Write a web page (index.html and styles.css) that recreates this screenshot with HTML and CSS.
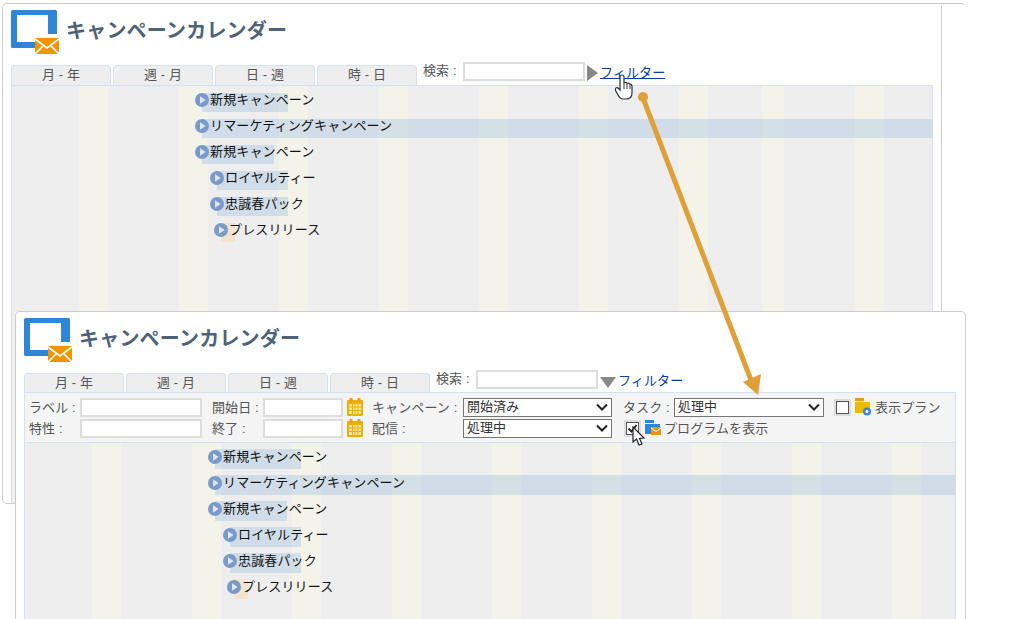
FILE: index.html
```html
<!DOCTYPE html>
<html lang="ja">

<head>
    <meta charset="UTF-8">
    <title>キャンペーンカレンダー</title>
    <link rel="stylesheet" href="styles.css">
</head>

<body>
    <!-- Shared icons -->
    <svg class="icon-defs" width="0" height="0">
        <symbol id="icon-play" viewBox="0 0 14 14">
            <circle cx="7" cy="7" r="7" fill="#7a9bc9" />
            <path d="M5 3.2 L10.6 7 L5 10.8 Z" fill="#dfe7f2" />
        </symbol>
        <symbol id="icon-logo" viewBox="0 0 48 44">
            <path d="M1.5 0 H44.5 Q46 0 46 1.5 V24 H37 V5 H6 V32 H24 V38 H1.5 Q0 38 0 36.5 V1.5 Q0 0 1.5 0 Z" fill="#2f86d6" />
            <rect x="24" y="28" width="24" height="16" fill="#f09400" />
            <path d="M24 29 L36 38 L48 29 M24 44 L33 35 M48 44 L39 35" fill="none" stroke="#fff" stroke-width="1.6" />
        </symbol>
        <symbol id="icon-date" viewBox="0 0 16 18">
            <rect x="0" y="2" width="16" height="16" rx="1" fill="#eeb000" />
            <rect x="2.5" y="0" width="3" height="4" fill="#f39a1e" />
            <rect x="10.5" y="0" width="3" height="4" fill="#f39a1e" />
            <path d="M2 6 H14 V16 H2 Z" fill="#fbe6a8" />
            <path d="M5.5 6 V16 M8 6 V16 M11 6 V16 M2 9 H14 M2 12.5 H14" stroke="#eeb000" stroke-width="1" />
        </symbol>
        <symbol id="icon-folder-plan" viewBox="0 0 16 18">
            <rect x="0" y="0" width="9" height="3" fill="#ea9a12" />
            <path d="M0 4 H15 V15 H0 Z" fill="#f2b705" />
            <circle cx="12" cy="13.5" r="4" fill="#3b87d6" />
            <circle cx="12" cy="13.5" r="1.5" fill="#fff" />
        </symbol>
        <symbol id="icon-folder-prog" viewBox="0 0 16 16">
            <rect x="0" y="0" width="9" height="3" fill="#2f86d6" />
            <path d="M0 4 H15 V14 H0 Z" fill="#2f86d6" />
            <rect x="6" y="7" width="10" height="8" fill="#f09400" />
            <path d="M6 8 L11 11.5 L16 8" fill="none" stroke="#fff" stroke-width="1" />
        </symbol>
    </svg>

    <!-- Back window: filter closed -->
    <div class="window window-back">
        <div class="page-head">
            <svg class="logo"><use href="#icon-logo" /></svg>
            <h1>キャンペーンカレンダー</h1>
        </div>
        <div class="tab-row">
            <div class="tab">月 - 年</div>
            <div class="tab">週 - 月</div>
            <div class="tab">日 - 週</div>
            <div class="tab">時 - 日</div>
            <div class="search">
                <label>検索 :</label>
                <input type="text" class="field field-search">
                <span class="arrow-right"></span>
                <a href="#" class="filter-link">フィルター</a>
            </div>
        </div>
        <div class="calendar">
            <div class="grid">
                <div class="event">
                    <div class="event-bar" style="left:190px;width:86px"></div>
                    <div class="event-label"><svg class="play"><use href="#icon-play" /></svg>新規キャンペーン</div>
                </div>
                <div class="event">
                    <div class="event-bar" style="left:190px;right:0"></div>
                    <div class="event-label"><svg class="play"><use href="#icon-play" /></svg>リマーケティングキャンペーン</div>
                </div>
                <div class="event">
                    <div class="event-bar" style="left:190px;width:72px"></div>
                    <div class="event-label"><svg class="play"><use href="#icon-play" /></svg>新規キャンペーン</div>
                </div>
                <div class="event">
                    <div class="event-bar" style="left:205px;width:71px"></div>
                    <div class="event-label indent"><svg class="play"><use href="#icon-play" /></svg>ロイヤルティー</div>
                </div>
                <div class="event">
                    <div class="event-bar" style="left:205px;width:71px"></div>
                    <div class="event-label indent"><svg class="play"><use href="#icon-play" /></svg>忠誠春パック</div>
                </div>
                <div class="event">
                    <div class="event-bar event-bar-task" style="left:209px;width:14px"></div>
                    <div class="event-label indent-more"><svg class="play"><use href="#icon-play" /></svg>プレスリリース</div>
                </div>
            </div>
        </div>
    </div>

    <!-- Front window: filter open -->
    <div class="window window-front">
        <div class="page-head">
            <svg class="logo"><use href="#icon-logo" /></svg>
            <h1>キャンペーンカレンダー</h1>
        </div>
        <div class="tab-row">
            <div class="tab">月 - 年</div>
            <div class="tab">週 - 月</div>
            <div class="tab">日 - 週</div>
            <div class="tab">時 - 日</div>
            <div class="search">
                <label>検索 :</label>
                <input type="text" class="field field-search">
                <span class="arrow-down"></span>
                <a href="#" class="filter-link filter-link-open">フィルター</a>
            </div>
        </div>
        <div class="calendar">
            <div class="filter">
                <div class="filter-row">
                    <label class="lbl">ラベル :</label>
                    <input type="text" class="field field-wide">
                    <label class="lbl lbl-gap">開始日 :</label>
                    <input type="text" class="field field-date">
                    <svg class="date-icon"><use href="#icon-date" /></svg>
                    <label class="lbl lbl-long">キャンペーン :</label>
                    <select class="pick">
                        <option>開始済み</option>
                    </select>
                    <label class="lbl lbl-task">タスク :</label>
                    <select class="pick pick-task">
                        <option>処理中</option>
                    </select>
                    <input type="checkbox" class="check check-plan">
                    <svg class="folder"><use href="#icon-folder-plan" /></svg>
                    <span class="check-text">表示プラン</span>
                </div>
                <div class="filter-row">
                    <label class="lbl">特性 :</label>
                    <input type="text" class="field field-wide">
                    <label class="lbl lbl-gap">終了 :</label>
                    <input type="text" class="field field-date">
                    <svg class="date-icon"><use href="#icon-date" /></svg>
                    <label class="lbl lbl-long">配信 :</label>
                    <select class="pick">
                        <option>処理中</option>
                    </select>
                    <input type="checkbox" class="check check-prog" checked>
                    <svg class="folder"><use href="#icon-folder-prog" /></svg>
                    <span class="check-text">プログラムを表示</span>
                </div>
            </div>
            <div class="grid">
                <div class="event">
                    <div class="event-bar" style="left:190px;width:86px"></div>
                    <div class="event-label"><svg class="play"><use href="#icon-play" /></svg>新規キャンペーン</div>
                </div>
                <div class="event">
                    <div class="event-bar" style="left:190px;right:0"></div>
                    <div class="event-label"><svg class="play"><use href="#icon-play" /></svg>リマーケティングキャンペーン</div>
                </div>
                <div class="event">
                    <div class="event-bar" style="left:190px;width:72px"></div>
                    <div class="event-label"><svg class="play"><use href="#icon-play" /></svg>新規キャンペーン</div>
                </div>
                <div class="event">
                    <div class="event-bar" style="left:205px;width:71px"></div>
                    <div class="event-label indent"><svg class="play"><use href="#icon-play" /></svg>ロイヤルティー</div>
                </div>
                <div class="event">
                    <div class="event-bar" style="left:205px;width:71px"></div>
                    <div class="event-label indent"><svg class="play"><use href="#icon-play" /></svg>忠誠春パック</div>
                </div>
                <div class="event">
                    <div class="event-bar event-bar-task" style="left:209px;width:14px"></div>
                    <div class="event-label indent-more"><svg class="play"><use href="#icon-play" /></svg>プレスリリース</div>
                </div>
            </div>
        </div>
    </div>

    <!-- Callout arrow and mouse pointers drawn over both windows -->
    <svg class="overlay" viewBox="0 0 1010 619">
        <line x1="643" y1="98" x2="751" y2="380" stroke="#dfa03a" stroke-width="5" />
        <circle cx="643" cy="97" r="5" fill="#dfa03a" />
        <path d="M758 395 L743 382 L761 374 Z" fill="#dfa03a" />
        <path d="M620 77 Q620 75 622 75 Q624 75 624 77 V83 Q626 81.5 627 83.5 Q629 82.5 630 84.5 Q632 84 632 86.5 V93 Q632 99 626 99 H623 Q620 99 618 95 L615.5 90.5 Q615 87.5 617.5 87.5 L620 90 Z" fill="#fff" stroke="#2b3038" stroke-width="1.2" />
        <path d="M624 84 V89 M627 84 V89 M630 85 V89" stroke="#2b3038" stroke-width="1" />
        <path d="M633 427 V442 L636.5 439 L639 445 L642 444 L639.5 438.5 L644 438 Z" fill="#fff" stroke="#20242a" stroke-width="1.2" />
    </svg>
</body>

</html>
```

FILE: styles.css
```css
/* Basic page setup */
html,
body {
    margin: 0;
    height: 619px;
    overflow: hidden;
    background-color: #ffffff;
}

body {
    position: relative;
    font-family: "Liberation Sans", "Noto Sans CJK JP", sans-serif;
    font-size: 13px;
    letter-spacing: 0.1px;
    color: #555555;
}

.icon-defs {
    position: absolute;
}

/* The two overlapping windows */
.window {
    position: absolute;
    box-sizing: border-box;
    padding: 0 8px;
    background-color: #ffffff;
    border: 1px solid #cccccc;
    border-radius: 5px;
    overflow: hidden;
}

.window-back {
    left: 2px;
    top: 3px;
    width: 964px;
    height: 501px;
    border-right-color: transparent;
}

/* Vertical edge of the back window */
.window-back::before {
    content: "";
    position: absolute;
    left: 938px;
    top: 2px;
    bottom: 0;
    width: 1px;
    background-color: #cccccc;
}

.window-front {
    left: 15px;
    top: 311px;
    width: 951px;
    height: 340px;
}

/* Logo and title */
.page-head {
    display: flex;
    align-items: flex-start;
    gap: 7px;
    height: 55px;
    padding-top: 6px;
}

.logo {
    width: 48px;
    height: 44px;
    flex: none;
}

h1 {
    margin: 6px 0 0;
    font-size: 20px;
    line-height: 30px;
    font-weight: bold;
    letter-spacing: 0.2px;
    color: #4f6378;
}

/* Tabs and search */
.tab-row {
    display: flex;
    gap: 2px;
    height: 20px;
}

.tab {
    box-sizing: border-box;
    width: 100px;
    height: 20px;
    background-color: #eeeeee;
    border: 1px solid #d5e0f0;
    border-bottom: none;
    border-radius: 4px 4px 0 0;
    text-align: center;
    line-height: 18px;
}

.search {
    display: flex;
    align-items: flex-start;
    margin: -3px 0 0 4px;
}

.search label {
    width: 40px;
    line-height: 18px;
}

.field {
    box-sizing: border-box;
    height: 19px;
    margin: 0;
    padding: 0 2px;
    background-color: #ffffff;
    border: 2px solid #dddddd;
    border-radius: 0;
}

.field-search {
    width: 122px;
}

.arrow-right {
    margin: 3px 2px 0 2px;
    border-left: 11px solid #888888;
    border-top: 8px solid transparent;
    border-bottom: 8px solid transparent;
}

.arrow-down {
    margin: 7px 2px 0 2px;
    border-top: 11px solid #888888;
    border-left: 8px solid transparent;
    border-right: 8px solid transparent;
}

.filter-link {
    color: #0b3d9c;
    line-height: 21px;
}

.filter-link-open {
    text-decoration: none;
}

/* Calendar body */
.calendar {
    box-sizing: border-box;
    height: 418px;
    background-color: #eeeeee;
    border: 1px solid #d5e0f0;
    border-bottom: none;
}

.window-back .calendar {
    width: 922px;
}

.window-front .calendar {
    width: 932px;
}

.window-front .tab-row {
    height: 19px;
}

.window-front .tab {
    height: 19px;
}

/* Filter bar */
.filter {
    box-sizing: border-box;
    height: 50px;
    padding: 4px 0 0 4px;
    background-color: #f4f4f4;
    border-bottom: 1px solid #d5e0f0;
}

.filter-row {
    display: flex;
    align-items: center;
    height: 20px;
    margin-bottom: 1px;
}

.lbl {
    flex: none;
    width: 51px;
    margin-top: -2px;
}

.lbl-gap {
    margin-left: 10px;
}

.lbl-long {
    width: 91px;
    margin-left: 9px;
}

.lbl-task {
    margin-left: 11px;
}

.field-wide {
    width: 122px;
}

.field-date {
    width: 80px;
}

.date-icon {
    flex: none;
    width: 16px;
    height: 18px;
    margin-left: 4px;
}

.pick {
    box-sizing: border-box;
    width: 149px;
    height: 19px;
    margin: 0;
    padding: 0 3px 2px;
    font-family: inherit;
    font-size: 13px;
    line-height: 15px;
    color: #333333;
    border: 1px solid #767676;
    border-radius: 0;
    appearance: none;
    background: #ffffff url("data:image/svg+xml,%3Csvg xmlns='http://www.w3.org/2000/svg' width='12' height='8'%3E%3Cpath d='M1 1.5 L6 6.5 L11 1.5' fill='none' stroke='%23222' stroke-width='2'/%3E%3C/svg%3E") no-repeat right 3px center;
}

.pick-task {
    width: 150px;
}

.check {
    flex: none;
    box-sizing: border-box;
    appearance: none;
    width: 13px;
    height: 13px;
    margin: 0 2px;
    background: #ffffff;
    border: 1px solid #555555;
    outline: 2px solid #dddddd;
}

.check:checked {
    background: #ffffff url("data:image/svg+xml,%3Csvg xmlns='http://www.w3.org/2000/svg' width='11' height='11'%3E%3Cpath d='M1.5 5.5 L4.5 8.5 L9.5 2' fill='none' stroke='%23222' stroke-width='2'/%3E%3C/svg%3E") no-repeat center;
}

.check-plan {
    margin-left: 12px;
}

.check-prog {
    margin-left: 14px;
}

.folder {
    flex: none;
    width: 16px;
    height: 18px;
    margin-left: 4px;
}

.check-text {
    margin-left: 3px;
    margin-top: -2px;
    white-space: nowrap;
}

.check-plan ~ .check-text {
    margin-left: 4px;
}

/* Gantt style grid with weekend stripes */
.grid {
    padding-top: 7px;
    height: 100%;
    box-sizing: border-box;
    background-repeat: no-repeat;
}

.window-front .grid {
    padding-top: 6px;
    background-image: repeating-linear-gradient(90deg, #eeeeee 0, #eeeeee 67px, #f3f3e9 67px, #f3f3e9 96px, #eeeeee 96px, #eeeeee 100px);
}

.window-back .grid {
    background-image: linear-gradient(90deg,
            #eeeeee 67px, #f3f3e9 67px, #f3f3e9 96px, #eeeeee 96px,
            #eeeeee 167px, #f3f3e9 167px, #f3f3e9 196px, #eeeeee 196px,
            #eeeeee 267px, #f3f3e9 267px, #f3f3e9 296px, #eeeeee 296px,
            #eeeeee 367px, #f3f3e9 367px, #f3f3e9 396px, #eeeeee 396px,
            #eeeeee 467px, #f3f3e9 467px, #f3f3e9 496px, #eeeeee 496px,
            #eeeeee 567px, #f3f3e9 567px, #f3f3e9 596px, #eeeeee 596px,
            #eeeeee 667px, #f3f3e9 667px, #f3f3e9 696px, #eeeeee 696px,
            #eeeeee 750px, #f3f3e9 750px, #f3f3e9 772px, #eeeeee 772px,
            #eeeeee 843px, #f3f3e9 843px, #f3f3e9 872px, #eeeeee 872px);
}

.event {
    position: relative;
    height: 20px;
    margin-bottom: 6px;
}

.window-back .event {
    height: 19px;
    margin-bottom: 7px;
}

.event-bar {
    position: absolute;
    top: 0;
    bottom: 0;
    background-color: rgba(184, 207, 227, 0.55);
}

.event-bar-task {
    background-color: rgba(250, 214, 165, 0.45);
}

.event-label {
    position: relative;
    display: flex;
    align-items: flex-start;
    height: 14px;
    line-height: 14px;
    margin-left: 183px;
    letter-spacing: 0.13px;
    color: #111111;
    white-space: nowrap;
}

.window-front .event-label {
    top: 1px;
}

.event-label.indent {
    margin-left: 198px;
}

.event-label.indent-more {
    margin-left: 202px;
}

.play {
    flex: none;
    width: 14px;
    height: 14px;
    margin-right: 1px;
}

/* Callout on top of everything */
.overlay {
    position: absolute;
    left: 0;
    top: 0;
    width: 1010px;
    height: 619px;
    pointer-events: none;
}
```
